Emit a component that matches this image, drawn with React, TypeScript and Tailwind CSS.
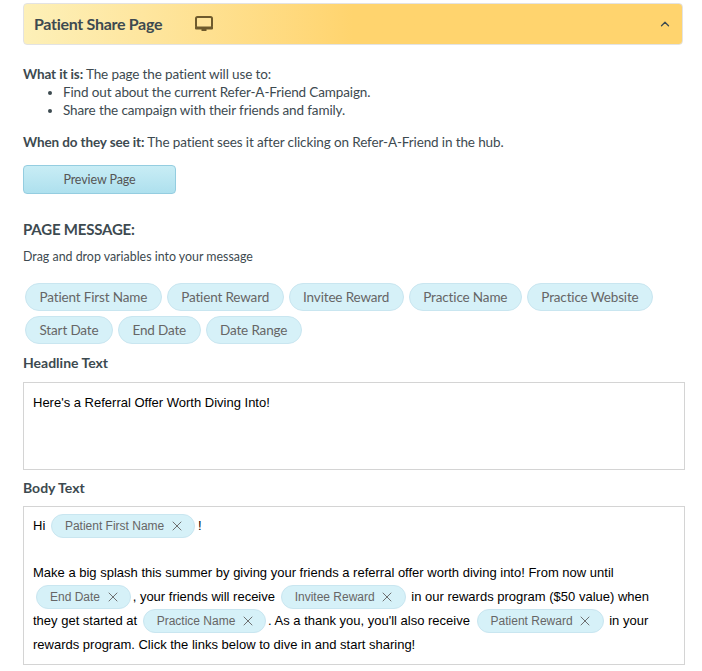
import { ChevronUp, X } from 'lucide-react';

const variables = [
  'Patient First Name',
  'Patient Reward',
  'Invitee Reward',
  'Practice Name',
  'Practice Website',
  'Start Date',
  'End Date',
  'Date Range',
];

function TextChip({ label, className = '' }: { label: string; className?: string }) {
  return (
    <span
      className={`inline-flex h-6 items-center gap-[4.5px] rounded-xl border border-[#c9e6f0] bg-[#d6f1f8] pl-[13px] pr-[9.5px] align-top text-[12px] leading-none text-[#666] ${className}`}
    >
      {label}
      <X size={16} strokeWidth={1.4} />
    </span>
  );
}

export default function App() {
  return (
    <div className="min-h-[671px] bg-white pl-[23px] pr-[17px] pt-[3px] font-['Lato',sans-serif] text-[#3d4a50]">
      {/* Accordion header */}
      <div className="mr-[2px] flex h-[42px] items-center rounded-sm border border-[#e3e3e3] bg-gradient-to-r from-[#fdf0b8] to-[#ffd46e] to-50% pl-[10px] pr-[10px]">
        <h2 className="w-[161px] text-[16px] font-bold tracking-[-0.3px]">Patient Share Page</h2>
        <svg width="18" height="16" viewBox="0 0 18 16" className="-mt-[1px] text-[#6e5a2c]">
          <rect x="1" y="1" width="16" height="10.5" rx="1.5" fill="#ffe49a" stroke="currentColor" strokeWidth="2" />
          <path d="M0 11h18v1.5a1 1 0 0 1-1 1H1a1 1 0 0 1-1-1zM6.5 13.5h5V15h-5z" fill="currentColor" />
        </svg>
        <ChevronUp size={14} strokeWidth={2.25} className="ml-auto" />
      </div>

      <div className="mt-[20px] text-[13.5px] leading-[18px] tracking-[-0.12px]">
        <p>
          <b>What it is:</b> The page the patient will use to:
        </p>
        <ul className="list-disc pl-[40px]">
          <li>Find out about the current Refer-A-Friend Campaign.</li>
          <li>Share the campaign with their friends and family.</li>
        </ul>
        <p className="mt-[14px]">
          <b>When do they see it:</b> The patient sees it after clicking on Refer-A-Friend in the hub.
        </p>
      </div>

      <button className="mt-[14px] block h-[29px] w-[153px] rounded-sm border border-[#94cde0] bg-gradient-to-b from-[#c8edf5] to-[#aee0ee] pt-[2px] text-[12.5px] tracking-[-0.1px] text-[#555]">
        Preview Page
      </button>

      <h3 className="mt-[25px] text-[15px] font-bold uppercase leading-5 tracking-[-0.2px]">Page Message:</h3>
      <p className="mt-[8px] text-[12.4px] leading-5">Drag and drop variables into your message</p>

      <div className="mt-[16px] flex flex-wrap gap-[5px] pl-[2px]">
        {variables.map((name) => (
          <span
            key={name}
            className="flex h-[28px] items-center rounded-[14px] border border-[#c9e6f0] bg-[#d6f1f8] px-[13.5px] text-[13.5px] tracking-[-0.15px] text-[#666]"
          >
            {name}
          </span>
        ))}
      </div>

      <label className="mt-[9px] block text-[14px] font-bold leading-5">Headline Text</label>
      <div className="mt-[9px] h-[88px] border border-[#d4d4d4] px-[9px] py-[11px] font-['Liberation_Sans',sans-serif] text-[13px] leading-[18px] text-black">
        Here's a Referral Offer Worth Diving Into!
      </div>

      <label className="mt-[8px] block text-[14px] font-bold leading-5">Body Text</label>
      <div className="mt-[8px] border border-[#d4d4d4] px-[9px] py-[7px] font-['Liberation_Sans',sans-serif] text-[13px] leading-[24px] text-black">
        <p>
          Hi <TextChip label="Patient First Name" className="ml-[2px] -mr-[1px]" /> !
        </p>
        <p className="mt-[23px]">
          Make a big splash this summer by giving your friends a referral offer worth diving into! From now until{' '}
          <TextChip label="End Date" className="ml-[3px] -mr-[2px]" /> , your friends will receive{' '}
          <TextChip label="Invitee Reward" className="mx-[2px]" /> in our rewards program ($50 value) when they get
          started at <TextChip label="Practice Name" className="ml-[2px] -mr-[2px]" /> . As a thank you, you'll also
          receive <TextChip label="Patient Reward" className="ml-[3px] mr-[2px]" /> in your rewards program. Click the
          links below to dive in and start sharing!
        </p>
      </div>
    </div>
  );
}
